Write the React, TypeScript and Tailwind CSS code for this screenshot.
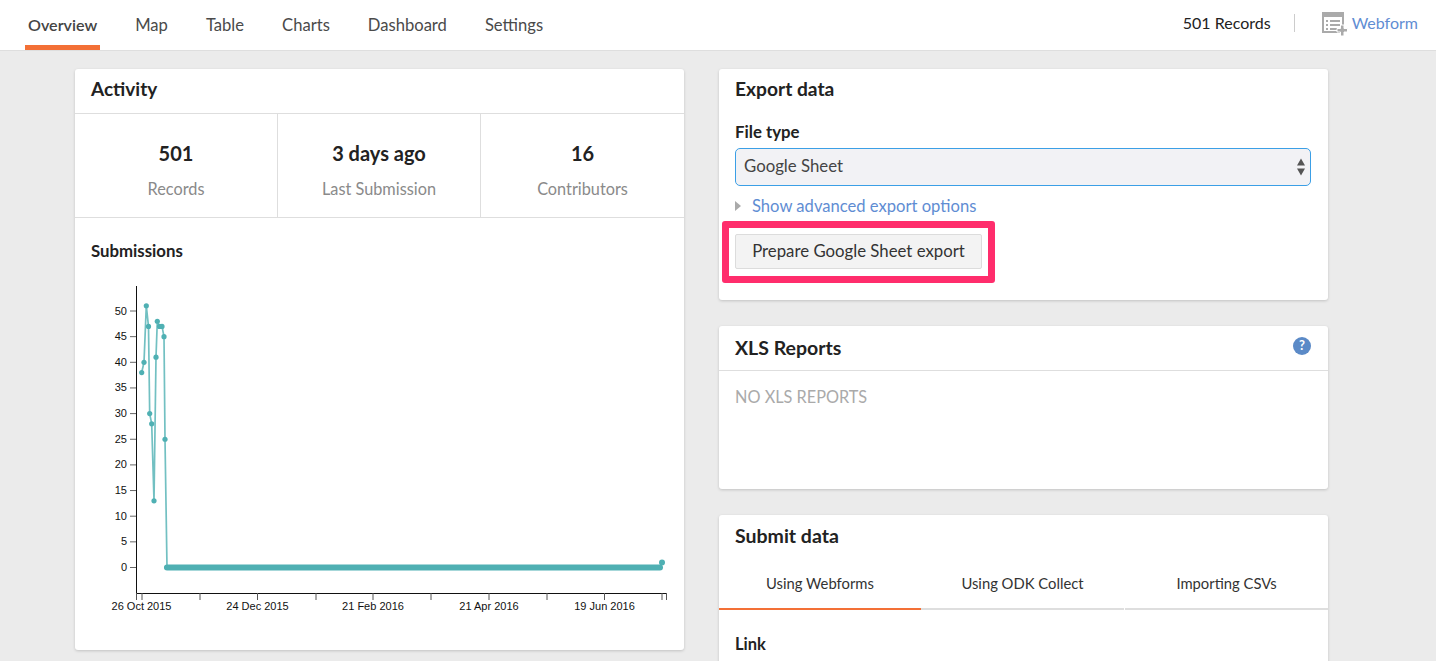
import React from 'react';

const font = { fontFamily: 'Lato, "Open Sans", sans-serif' };

const tabs = ['Overview', 'Map', 'Table', 'Charts', 'Dashboard', 'Settings'];

const stats = [
  { value: '501', label: 'Records' },
  { value: '3 days ago', label: 'Last Submission' },
  { value: '16', label: 'Contributors' },
];

// [x, y] of the early spike, the rest of the series sits on zero
const points: [number, number][] = [
  [141.7, 38], [144, 40], [146.3, 51], [148.5, 47], [149.7, 30], [151.7, 28], [154, 13],
  [156, 41], [157.3, 48], [159.5, 47], [162, 47], [164, 45], [165, 25], [167, 0],
];

const yPos = (v: number) => 566.5 - v * 5.13;
const xTicks = [136.5, 142, 200, 257.5, 316, 373, 431, 489, 547, 604.5, 662, 666.5];
const xLabels = [
  { x: 141.5, t: '26 Oct 2015' },
  { x: 257.5, t: '24 Dec 2015' },
  { x: 373, t: '21 Feb 2016' },
  { x: 489, t: '21 Apr 2016' },
  { x: 604.5, t: '19 Jun 2016' },
];
const yTicks = [0, 5, 10, 15, 20, 25, 30, 35, 40, 45, 50];

const Chart = () => {
  const line = points.map(([x, v]) => `${x},${yPos(v)}`).join(' ');
  return (
    <svg width="609" height="381" viewBox="75 269 609 381" className="block" style={{ fontFamily: '"Liberation Sans", Arial, sans-serif' }}>
      <path d="M136.5 285V592.5H667" fill="none" stroke="#111" strokeWidth="1" />
      {yTicks.map((v) => (
        <g key={v}>
          <line x1="130" x2="136" y1={yPos(v)} y2={yPos(v)} stroke="#666" strokeWidth="1" />
          <text x="127" y={yPos(v) + 3.5} textAnchor="end" fontSize="11" fill="#111">{v}</text>
        </g>
      ))}
      {xTicks.map((x) => (
        <line key={x} x1={x} x2={x} y1="592" y2="599" stroke="#555" strokeWidth="1" />
      ))}
      {xLabels.map((l) => (
        <text key={l.t} x={l.x} y="609" textAnchor="middle" fontSize="11" fill="#111">{l.t}</text>
      ))}
      <polyline points={line} fill="none" stroke="#4fb0b3" strokeOpacity="0.8" strokeWidth="1.7" />
      <line x1="167" x2="660" y1="566.5" y2="566.5" stroke="#4fb0b3" strokeWidth="6" strokeLinecap="round" />
      <line x1="660" x2="662" y1="566" y2="561.5" stroke="#4fb0b3" strokeWidth="1.5" />
      {points.map(([x, v]) => (
        <circle key={x} cx={x} cy={yPos(v)} r="2.6" fill="#4fb0b3" />
      ))}
      <circle cx="662" cy="561.5" r="3" fill="#4fb0b3" />
    </svg>
  );
};

const WebformIcon = () => (
  <svg width="26" height="25" viewBox="0 0 26 25" className="block mt-[3px] ml-[1px]">
    <rect x="1" y="1" width="20" height="19" fill="#fff" stroke="#aaa" strokeWidth="2" />
    <rect x="1" y="1" width="20" height="4" fill="#aaa" />
    <path d="M4 8h2v2H4zM8 8h10v2H8zM4 12h2v2H4zM8 12h10v2H8zM4 16h2v2H4zM8 16h7v2H8z" fill="#aaa" />
    <path d="M18.5 13h3.5v3.5h3.5V20H22v4h-3.5v-4H15v-3.5h3.5z" fill="#aaa" stroke="#fff" strokeWidth="1" />
  </svg>
);

const SelectArrows = () => (
  <svg width="10" height="18" viewBox="0 0 10 18" className="block">
    <path d="M5 0.5L9 7.5H1zM1 10.5H9L5 17.5z" fill="#555" />
  </svg>
);

const Card = ({ className, children }: { className: string; children: React.ReactNode }) => (
  <div className={`bg-white rounded-[3px] shadow-[0_1px_3px_rgba(0,0,0,0.18)] ${className}`}>{children}</div>
);

const App: React.FC = () => {
  return (
    <div className="h-[661px] w-[1436px] overflow-hidden bg-[#ebebeb] text-[#222]" style={font}>
      {/* Top nav */}
      <div className="h-[51px] bg-white border-b border-[#dedede] flex items-stretch pl-[25px] pr-[18px]">
        <div className="flex gap-8">
          {tabs.map((t, i) => (
            <div
              key={t}
              className={`px-[3px] pt-[13px] leading-[24px] h-[50px] ${
                i === 0 ? 'text-[16.1px] font-semibold text-[#444] border-b-[5px] border-[#f37036]' : 'text-[16.6px] text-[#4a4a4a]'
              }`}
            >
              {t}
            </div>
          ))}
        </div>
        <div className="ml-auto flex items-center pb-[4px]">
          <span className="text-[16px] text-[#222]">501 Records</span>
          <div className="w-px h-[18px] bg-[#ccc] ml-[23px] mr-[26px]" />
          <WebformIcon />
          <span className="text-[16px] text-[#5f8dd3] ml-[4px]">Webform</span>
        </div>
      </div>

      <div className="flex gap-[35px] pl-[75px] pt-[18px]">
        {/* Left column */}
        <Card className="w-[609px] h-[581px]">
          <div className="h-[45px] border-b border-[#dedede] px-4 pb-[3px] flex items-center">
            <h2 className="text-[19px] font-bold">Activity</h2>
          </div>
          <div className="grid grid-cols-3 h-[104px] border-b border-[#dedede]">
            {stats.map((s, i) => (
              <div key={s.label} className={`flex flex-col items-center pt-[26px] ${i < 2 ? 'border-r border-[#dedede]' : ''}`}>
                <div className="text-[20px] leading-[26px] font-bold">{s.value}</div>
                <div className="text-[16.3px] leading-[24px] mt-[11px] text-[#8a8a8a]">{s.label}</div>
              </div>
            ))}
          </div>
          <div className="relative">
            <div className="absolute left-4 top-[23px] text-[16.8px] leading-5 font-bold">Submissions</div>
            <div className="h-[52px]" />
            <Chart />
          </div>
        </Card>

        {/* Right column */}
        <div className="w-[609px] flex flex-col gap-[26px]">
          <Card className="h-[231px] px-4 relative">
            <h2 className="text-[19.2px] font-bold leading-6 pt-[8px]">Export data</h2>
            <div className="text-[16.8px] font-bold leading-5 mt-[21px]">File type</div>
            <div className="mt-[6px] h-[38px] w-[576px] rounded-[5px] border border-[#3b9fe6] bg-[#f2f2f5] flex items-center justify-between pl-2 pr-[4px] text-[16.8px] text-[#444]">
              <span className="pb-[3px]">Google Sheet</span>
              <SelectArrows />
            </div>
            <div className="flex items-center mt-[8px] h-6">
              <span className="w-0 h-0 border-y-[5px] border-y-transparent border-l-[6px] border-l-[#aaa] mr-[11px]" />
              <span className="text-[16.6px] text-[#5f8dd3]">Show advanced export options</span>
            </div>
            <div className="mt-[16px] h-[35px] w-[247px] rounded-[2px] border border-[#dcdcdc] bg-[#f3f3f3] flex items-center justify-center pb-[1px] text-[16.8px] text-[#333]">
              Prepare Google Sheet export
            </div>
            {/* pink annotation around the button */}
            <div className="absolute left-[3px] top-[152px] w-[273px] h-[62px] rounded-[3px] border-[7px] border-[#ff2d6c]" />
          </Card>

          <Card className="h-[163px] relative">
            <div className="h-[45px] border-b border-[#dedede] px-4 pb-[1px] flex items-center">
              <h2 className="text-[19.5px] font-bold">XLS Reports</h2>
            </div>
            <div className="px-4 pt-[14px] text-[16.3px] leading-6 text-[#aaa]">NO XLS REPORTS</div>
            <div className="absolute right-[17px] top-[11px] w-[18px] h-[18px] rounded-full bg-[#5b8ac7] text-white text-[13px] font-bold flex items-center justify-center">
              ?
            </div>
          </Card>

          <Card className="h-[200px]">
            <h2 className="text-[19.5px] font-bold leading-6 px-4 pt-[9px]">Submit data</h2>
            <div className="grid grid-cols-[202px_203px_204px] mt-[12px]">
              <div className="h-[50px] border-b-2 border-[#f37036] flex items-center justify-center pb-[1px] text-[14.8px] text-[#333]">Using Webforms</div>
              <div className="h-[50px] border-b-2 border-[#dedede] flex items-center justify-center pb-[1px] text-[14.8px] text-[#333]">Using ODK Collect</div>
              <div className="h-[50px] border-b-2 border-[#dedede] ml-px flex items-center justify-center pb-[1px] text-[14.8px] text-[#333]">Importing CSVs</div>
            </div>
            <div className="px-4 pt-[24px] text-[16.5px] font-bold leading-5">Link</div>
          </Card>
        </div>
      </div>
    </div>
  );
};

export default App;
